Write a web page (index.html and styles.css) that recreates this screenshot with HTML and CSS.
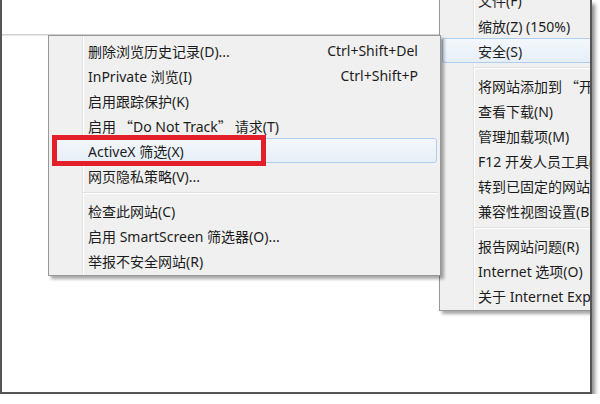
FILE: index.html
```html
<!DOCTYPE html>
<html lang="zh-CN">
<head>
<meta charset="utf-8">
<title>IE 安全菜单</title>
<link rel="stylesheet" href="styles.css">
</head>
<body>
<div class="screen">
  <div class="toolbar"></div>
  <div class="page"></div>

  <div class="menu menu-tools">
    <div class="item"><span>文件(F)</span></div>
    <div class="item"><span>缩放(Z) (150%)</span></div>
    <div class="item hover"><span>安全(S)</span></div>
    <div class="sep"></div>
    <div class="item"><span>将网站添加到<span class="q ql">“</span>开始<span class="q qr">”</span>菜单(M)</span></div>
    <div class="item"><span>查看下载(N)</span></div>
    <div class="item"><span>管理加载项(M)</span></div>
    <div class="item"><span>F12 开发人员工具(L)</span></div>
    <div class="item"><span>转到已固定的网站(G)</span></div>
    <div class="item"><span>兼容性视图设置(B)</span></div>
    <div class="sep"></div>
    <div class="item"><span>报告网站问题(R)</span></div>
    <div class="item"><span>Internet 选项(O)</span></div>
    <div class="item"><span>关于 Internet Explorer(A)</span></div>
  </div>

  <div class="menu menu-safety">
    <div class="item"><span>删除浏览历史记录(D)...</span><span class="key">Ctrl+Shift+Del</span></div>
    <div class="item"><span>InPrivate 浏览(I)</span><span class="key">Ctrl+Shift+P</span></div>
    <div class="item"><span>启用跟踪保护(K)</span></div>
    <div class="item"><span>启用<span class="q ql">“</span>Do Not Track<span class="q qr">”</span>请求(T)</span></div>
    <div class="item hover"><span>ActiveX 筛选(X)</span></div>
    <div class="item"><span>网页隐私策略(V)...</span></div>
    <div class="sep"></div>
    <div class="item"><span>检查此网站(C)</span></div>
    <div class="item"><span>启用 SmartScreen 筛选器(O)...</span></div>
    <div class="item"><span>举报不安全网站(R)</span></div>
  </div>

  <div class="callout"></div>
</div>
</body>
</html>
```

FILE: styles.css
```css
* { box-sizing: border-box; }

html, body {
  margin: 0;
  padding: 0;
  background: #ffffff;
}

.screen {
  position: relative;
  width: 592px;
  height: 394px;
  background: #ffffff;
  border-left: 2px solid #555555;
  border-right: 2px solid #555555;
  border-bottom: 2px solid #555555;
  box-shadow: 3px 4px 4px rgba(0, 0, 0, 0.45);
  overflow: hidden;
}

.toolbar {
  height: 35px;
  border-bottom: 1px solid #d2d2d2;
  box-shadow: 0 1px 0 #e8e8e8;
}

.menu {
  position: absolute;
  border: 1px solid #979797;
  padding: 2px 0;
  background-color: #f0f0f0;
  background-image: linear-gradient(to right,
    transparent 33px, #e2e3e3 33px, #e2e3e3 34px,
    #ffffff 34px, #ffffff 35px, transparent 35px);
  box-shadow: 3px 3px 3px rgba(0, 0, 0, 0.35);
  font-family: "Noto Sans", "Noto Sans CJK SC", sans-serif;
  font-size: 14px;
  color: #1c1c1c;
}

.menu-tools {
  left: 437px;
  top: -16px;
  width: 180px;
  z-index: 1;
}

.menu-safety {
  left: 46px;
  top: 35px;
  width: 393px;
  z-index: 2;
}

.item {
  height: 25px;
  margin: 0 3px;
  padding: 0 18px 0 35px;
  border: 1px solid transparent;
  border-radius: 3px;
  display: flex;
  align-items: center;
  justify-content: space-between;
  white-space: nowrap;
}

.menu-tools .item {
  margin: 0 2px;
  padding-left: 35px;
}

.menu-tools .item:first-child {
  height: 26px;
}

.item.hover {
  border-color: #aecff0;
  background: linear-gradient(to bottom, #f4f8fc, #e6eef8);
}

.q {
  display: inline-block;
  width: 17px;
  font-family: "Noto Sans CJK SC", sans-serif;
}

.ql { text-align: right; }
.qr { text-align: left; }

.sep {
  height: 1px;
  margin: 4px 2px 5px 34px;
  background: #e0e0e0;
  box-shadow: 0 1px 0 #ffffff;
}

.callout {
  position: absolute;
  left: 50px;
  top: 135px;
  width: 214px;
  height: 31px;
  border: 5px solid #e3202a;
  z-index: 3;
}
```
